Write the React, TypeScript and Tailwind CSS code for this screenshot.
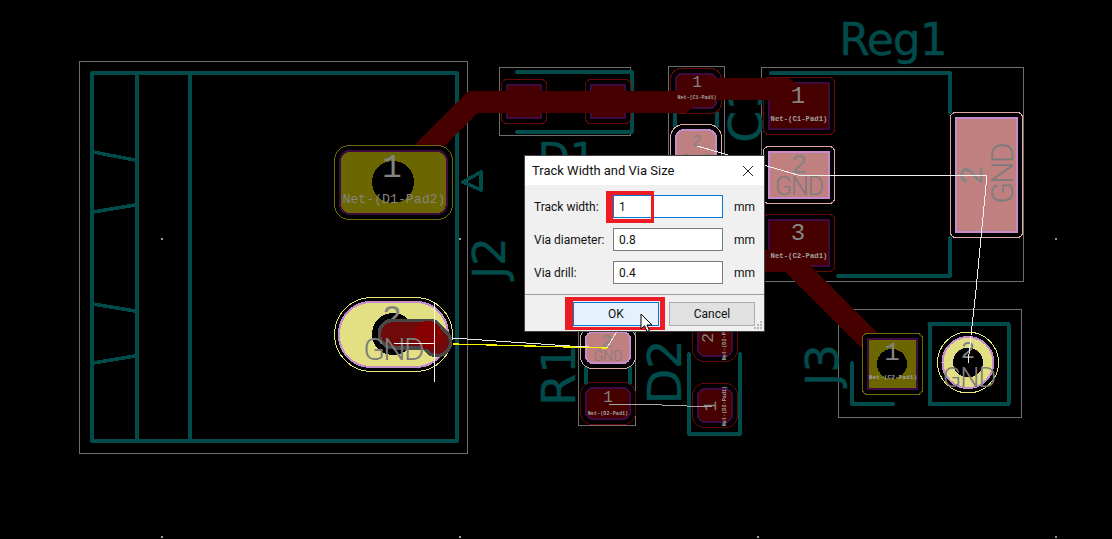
import React from "react";

const TEAL = "#024b4b";
const DARK = "#470000";
const GRAY = "#848484";
const COURT = "#6e6e6e";
const DARK_OUT = "#640808";
const PINK_OUT = "#e0a8a8";
const YEL_OUT = "#e8e880";
const OLIVE_OUT = "#6e6a00";

type PadProps = {
  x: number; y: number; w: number; h: number; rx?: number; kind: "dark" | "pink" | "olive"; m?: number;
};

function Pad({ x, y, w, h, rx = 0, kind, m = 5 }: PadProps) {
  const fill = kind === "dark" ? DARK : kind === "pink" ? "#c08080" : "#6b6600";
  const edge = kind === "dark" || kind === "olive" ? "#3f0a40" : "#c48ccc";
  const out = kind === "dark" ? DARK_OUT : kind === "pink" ? PINK_OUT : OLIVE_OUT;
  return (
    <g>
      <rect x={x - m + 0.5} y={y - m + 0.5} width={w + 2 * m - 1} height={h + 2 * m - 1} rx={rx + m} fill="#000" stroke={out} strokeWidth="1" />
      <rect x={x + 1} y={y + 1} width={w - 2} height={h - 2} rx={rx} fill={fill} stroke={edge} strokeWidth="2" />
    </g>
  );
}

type TextProps = { x: number; y: number; size: number; children: React.ReactNode; rotate?: number; spacing?: number };

function place({ x, y, rotate }: TextProps) {
  return { x, y, textAnchor: "middle" as const, transform: rotate ? `rotate(${rotate} ${x} ${y})` : undefined };
}

/* pad number */
function Num(p: TextProps) {
  return (
    <text {...place(p)} fontSize={p.size} fill={GRAY} style={{ fontFamily: '"Liberation Mono", monospace' }}>
      {p.children}
    </text>
  );
}

/* net name in a big pad */
function Net(p: TextProps) {
  return (
    <text {...place(p)} fontSize={p.size} fill="#7c7c7c" letterSpacing={p.spacing ?? 0} style={{ fontFamily: 'Roboto, sans-serif', fontWeight: 300 }}>
      {p.children}
    </text>
  );
}

/* tiny net name */
function Tiny(p: TextProps) {
  return (
    <text {...place(p)} fontSize={p.size} fill="#a2a2a2" letterSpacing={p.spacing ?? 0} style={{ fontFamily: '"Liberation Mono", monospace', fontWeight: 700 }}>
      {p.children}
    </text>
  );
}

function Ref(p: TextProps) {
  return (
    <text {...place(p)} fontSize={p.size} fill={TEAL} stroke={TEAL} strokeWidth="0.4" letterSpacing={p.spacing ?? 0} style={{ fontFamily: '"DejaVu Sans", sans-serif' }}>
      {p.children}
    </text>
  );
}

function Board() {
  const silk = { fill: "none", stroke: TEAL, strokeWidth: 3.5, strokeLinecap: "round" as const, strokeLinejoin: "round" as const };
  const court = { fill: "none", stroke: COURT, strokeWidth: 1 };
  return (
    <svg width="1112" height="539" viewBox="0 0 1112 539" className="block" shapeRendering="crispEdges">
      {[161, 459, 757, 1055].map((x) => (
        <g key={x}>
          <rect x={x} y={238} width="2" height="2" fill="#999" />
          <rect x={x} y={536} width="2" height="2" fill="#999" />
        </g>
      ))}

      {/* courtyards */}
      <rect x="79.5" y="61.5" width="388" height="392" {...court} />
      <rect x="499.5" y="67.5" width="131" height="68" {...court} />
      <rect x="668.5" y="66.5" width="56" height="130" {...court} />
      <rect x="761.5" y="67.5" width="262" height="214" {...court} />
      <rect x="838.5" y="309.5" width="183" height="108" {...court} />
      <rect x="578.5" y="325.5" width="57" height="100" {...court} />

      {/* J2 silk */}
      <path d="M92 73H457V441H92Z M137 73V441 M190 73V441 M93 152L135 160 M93 212L135 205 M93 304L135 311 M93 363L135 356" {...silk} />
      <path d="M463 182L481 172V190Z" {...silk} />
      <Ref x={505} y={258} size={45} rotate={-90}>J2</Ref>

      {/* D1 */}
      <path d="M517 72H632V132H517" {...silk} />
      <Ref x={567} y={173} size={42}>D1</Ref>

      {/* C1 */}
      <path d="M675 113V126 M717 113V126" {...silk} />
      <Ref x={762} y={112} size={46} rotate={-90}>C1</Ref>

      {/* Reg1 */}
      <Ref x={893} y={55} size={44} spacing={-1}>Reg1</Ref>
      <path d="M771 73H950V112 M950 238V276H838" {...silk} />

      {/* J3 */}
      <path d="M852 363V404H893" {...silk} />
      <path d="M929.5 323.5H1008.5V404H929.5Z" {...silk} strokeWidth={4} strokeLinecap="butt" />
      <Ref x={838} y={365} size={45} rotate={-90}>J3</Ref>

      {/* R1 / D2 */}
      <path d="M586 367V384 M630 367V384" {...silk} strokeLinecap="butt" />
      <Ref x={575} y={375} size={46} rotate={-90}>R1</Ref>
      <Ref x={681} y={372} size={46} rotate={-90}>D2</Ref>
      <path d="M689 354V434H740V354" {...silk} />

      {/* pads under tracks */}
      <Pad x={506} y={84} w={36} h={35} kind="dark" />
      <Pad x={590} y={84} w={36} h={35} kind="dark" />
      <Pad x={675} y={73} w={42} h={36} rx={6} kind="dark" />
      <Pad x={768} y={82} w={62} h={48} kind="dark" />
      <Pad x={768} y={219} w={62} h={48} kind="dark" />

      {/* tracks */}
      <path d="M400 175L473 102H682L700 89H785L800 100" fill="none" stroke={DARK} strokeWidth="22" strokeLinejoin="miter" />
      <path d="M765 261H790L893 364" fill="none" stroke={DARK} strokeWidth="22" strokeLinejoin="miter" />

      <Num x={697} y={87} size={16}>1</Num>
      <Tiny x={697} y={99} size={5}>Net-(C1-Pad1)</Tiny>
      <Num x={798} y={103} size={24}>1</Num>
      <Tiny x={799} y={121} size={7.3}>Net-(C1-Pad1)</Tiny>
      <Num x={798} y={240} size={24}>3</Num>
      <Tiny x={799} y={258} size={7.3}>Net-(C2-Pad1)</Tiny>

      {/* C1 pad 2 + Reg pad 2 */}
      <Pad x={675} y={129} w={42} h={42} rx={8} kind="pink" />
      <Num x={697} y={146} size={16}>2</Num>
      <Net x={697} y={166} size={16}>GND</Net>
      <Pad x={768} y={151} w={62} h={48} kind="pink" />
      <Num x={799} y={173} size={27}>2</Num>
      <Net x={799} y={195} size={25} spacing={-1}>GND</Net>
      <Pad x={955} y={117} w={63} h={116} kind="pink" />
      <Num x={982} y={175} size={33} rotate={-90}>2</Num>
      <Net x={1013} y={174} size={32} rotate={-90} spacing={-2}>GND</Net>

      {/* J2 pads */}
      <Pad x={339} y={150} w={109} h={65} rx={10} kind="olive" />
      <circle cx="393" cy="182" r="21" fill="#000" />
      <Num x={392} y={177} size={33}>1</Num>
      <text x={394} y={203} textAnchor="middle" fontSize={13.2} fill={GRAY} style={{ fontFamily: '"Liberation Mono", monospace' }}>
        Net-(D1-Pad2)
      </text>
      <rect x="339" y="302" width="109" height="65" rx="32" fill="#e2e082" stroke="#c48ccc" strokeWidth="2" />
      <rect x="334.5" y="297.5" width="118" height="74" rx="37" fill="none" stroke={YEL_OUT} strokeWidth="1" />
      <circle cx="393" cy="334" r="21" fill="#000" />
      <Num x={392} y={328} size={33}>2</Num>
      <path d="M393 334H429L437 342" fill="none" stroke="#484848" strokeWidth="31" strokeLinecap="round" strokeLinejoin="round" />
      <path d="M393 334H429L437 342" fill="none" stroke="#6e0a0a" strokeWidth="24" strokeLinecap="round" strokeLinejoin="round" />
      <circle cx="428" cy="335" r="14" fill="#870000" />
      <Net x={393} y={360} size={32} spacing={-2}>GND</Net>
      <path d="M394 343H435 M434.5 302V382" stroke="#f2f2f2" strokeWidth="1" fill="none" />

      {/* J3 pads */}
      <Pad x={867} y={338} w={51} h={52} kind="olive" />
      <circle cx="892" cy="364" r="15" fill="#000" />
      <Num x={892} y={360} size={26}>1</Num>
      <Tiny x={893} y={379} size={6.2}>Net-(C2-Pad1)</Tiny>
      <circle cx="968" cy="362.5" r="30.5" fill="#000" stroke={YEL_OUT} strokeWidth="1" />
      <circle cx="968" cy="362.5" r="25.5" fill="#e2e082" stroke="#c48ccc" strokeWidth="2" />
      <circle cx="968" cy="362.5" r="15" fill="#000" />
      <Num x={968} y={358} size={24}>2</Num>
      <Net x={969} y={387} size={27} spacing={-1}>GND</Net>

      {/* R1 pads */}
      <Pad x={585} y={331} w={46} h={33} rx={7} kind="pink" />
      <Num x={607} y={347} size={18}>2</Num>
      <Net x={608} y={361} size={14.5}>GND</Net>
      <Pad x={585} y={387} w={46} h={33} rx={7} kind="dark" />
      <Num x={608} y={402} size={16}>1</Num>
      <Tiny x={608} y={415} size={5.2}>Net-(D2-Pad1)</Tiny>

      {/* D2 pads */}
      <Pad x={697} y={322} w={36} h={35} rx={7} kind="dark" />
      <Num x={713} y={338} size={17} rotate={-90}>2</Num>
      <Tiny x={726} y={340} size={5.2} rotate={-90}>Net-(D2-Pad2)</Tiny>
      <Pad x={697} y={388} w={36} h={35} rx={7} kind="dark" />
      <Num x={716} y={406} size={18} rotate={-90}>1</Num>
      <Tiny x={726} y={406} size={5.2} rotate={-90}>Net-(D2-Pad1)</Tiny>

      {/* ratsnest */}
      <path d="M697 146L798 175H987L976 290L968 363" fill="none" stroke="#f0f0f0" strokeWidth="1" />
      <path d="M452 338L570 346L607 348L617 331" fill="none" stroke="#e6e6e6" strokeWidth="1" />
      <path d="M453 344L607 348" fill="none" stroke="#f5f500" strokeWidth="1.3" />
      <path d="M608 404L662 405L712 407" fill="none" stroke="#a8a8a8" strokeWidth="1" />
    </svg>
  );
}

function Field({ label, value, active }: { label: string; value: string; active?: boolean }) {
  return (
    <div className="flex h-[23px] items-center">
      <span className="w-[79px] text-[12px] text-[#111]">{label}</span>
      <div
        className={`flex h-[23px] w-[110px] items-center border bg-white pl-[5px] text-[12px] text-[#111] ${active ? "border-[#0078d7]" : "border-[#7a7a7a]"}`}
      >
        {value}
      </div>
      <span className="ml-[11px] text-[12px] text-[#111]">mm</span>
    </div>
  );
}

function Dialog() {
  return (
    <div
      className="absolute left-[524px] top-[155px] flex h-[177px] w-[241px] flex-col border border-[#444] bg-[#f0f0f0]"
      style={{ fontFamily: 'Roboto, sans-serif' }}
    >
      <div className="flex h-[29px] items-center justify-between bg-white pl-[7px] pr-[10px]">
        <span className="text-[13px] text-[#111]">Track Width and Via Size</span>
        <svg width="12" height="12" viewBox="0 0 12 12" fill="none" stroke="#222" strokeWidth="1">
          <path d="M1 1L11 11M11 1L1 11" />
        </svg>
      </div>
      <div className="flex flex-1 flex-col gap-[10px] pl-[9px] pt-[10px]">
        <Field label="Track width:" value="1" active />
        <Field label="Via diameter:" value="0.8" />
        <Field label="Via drill:" value="0.4" />
      </div>
      <div className="flex h-[37px] justify-end gap-[10px] border-t border-[#a0a0a0] pr-[9px] pt-[7px]">
        <button className="h-[24px] w-[86px] border border-[#0078d7] bg-[#e5f1fb] text-[12px] text-[#111]">OK</button>
        <button className="h-[24px] w-[86px] border border-[#adadad] bg-[#e1e1e1] text-[12px] text-[#111]">Cancel</button>
      </div>
      <svg width="10" height="10" viewBox="0 0 10 10" className="absolute bottom-[1px] right-[1px]">
        <g fill="#b8b8b8">
          <rect x="7" y="1" width="2" height="2" />
          <rect x="4" y="4" width="2" height="2" />
          <rect x="7" y="4" width="2" height="2" />
          <rect x="1" y="7" width="2" height="2" />
          <rect x="4" y="7" width="2" height="2" />
          <rect x="7" y="7" width="2" height="2" />
        </g>
      </svg>
    </div>
  );
}

export default function App() {
  return (
    <div className="relative h-[539px] w-[1112px] overflow-hidden bg-black">
      <Board />
      <Dialog />
      <div className="absolute left-[606px] top-[191px] h-[32px] w-[48px] border-y-4 border-r-[3px] border-l-[7px] border-[#ed1c24]" />
      <div className="absolute left-[565px] top-[297px] h-[33px] w-[100px] border-t-4 border-r-[5px] border-b-[3px] border-l-[8px] border-[#ed1c24]" />
      <svg width="14" height="21" viewBox="0 0 14 21" className="absolute left-[640px] top-[313px]">
        <path d="M1 1V16L4.5 12.8L7 18.5L9.5 17.5L7 12H12Z" fill="#fff" stroke="#000" strokeWidth="1" strokeLinejoin="miter" />
      </svg>
    </div>
  );
}
